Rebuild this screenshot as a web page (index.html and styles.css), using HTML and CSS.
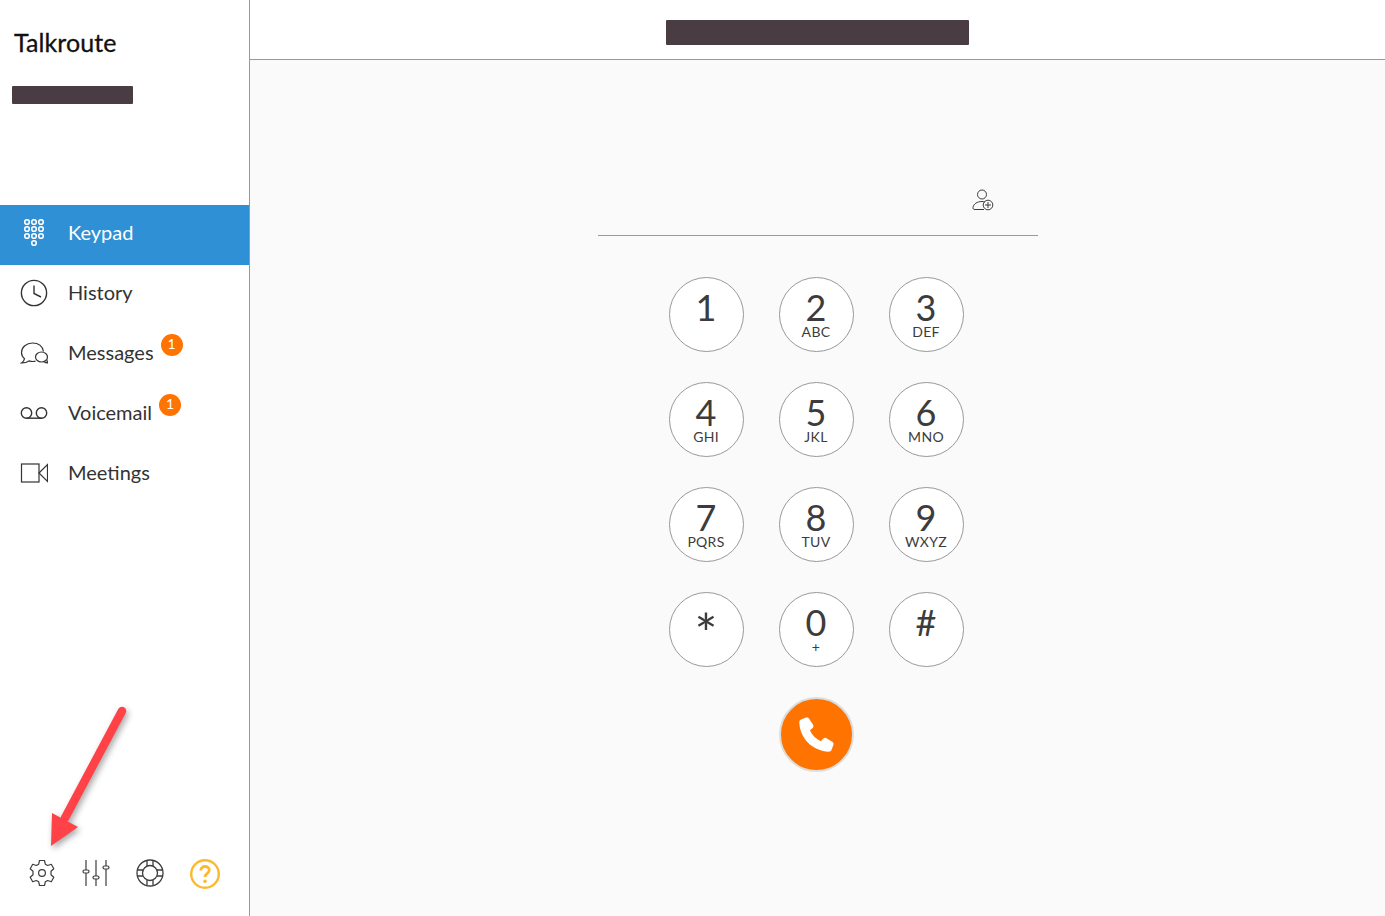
FILE: index.html
```html
<!DOCTYPE html>
<html lang="en">
<head>
    <meta charset="UTF-8">
    <title>Talkroute</title>
    <link rel="stylesheet" href="styles.css">
</head>
<body>
    <aside class="sidebar">
        <div class="brand">Talkroute</div>
        <div class="redacted redacted-user"></div>

        <nav class="nav">
            <a class="nav-item active">
                <svg class="nav-icon" viewBox="0 0 28 28" fill="none" stroke="#fff" stroke-width="1.6">
                    <circle cx="7" cy="3" r="2.3"/><circle cx="14" cy="3" r="2.3"/><circle cx="21" cy="3" r="2.3"/>
                    <circle cx="7" cy="10" r="2.3"/><circle cx="14" cy="10" r="2.3"/><circle cx="21" cy="10" r="2.3"/>
                    <circle cx="7" cy="17" r="2.3"/><circle cx="14" cy="17" r="2.3"/><circle cx="21" cy="17" r="2.3"/>
                    <circle cx="14" cy="24" r="2.3"/>
                </svg>
                <span>Keypad</span>
            </a>
            <a class="nav-item">
                <svg class="nav-icon" viewBox="0 0 28 28" fill="none" stroke="#333" stroke-width="1.4">
                    <circle cx="14" cy="14" r="12.6"/>
                    <path d="M14 6.5V14.5L21 18"/>
                </svg>
                <span>History</span>
            </a>
            <a class="nav-item">
                <svg class="nav-icon" viewBox="0 0 28 28" fill="none" stroke="#333" stroke-width="1.2">
                    <path d="M15.500 22.200C14.700 22.400 14 22.500 13 22.500C11.500 22.500 10.200 22.300 9 21.900C7 23.200 4.500 24 1.500 23.900C3 23 4.200 21.600 4.500 19.600C2.500 18 1.500 15.800 1.500 13.500C1.500 8 6.500 4 12.500 4C18.500 4 22.500 7.500 23.500 12.500"/>
                    <ellipse cx="21.500" cy="18" rx="6" ry="5"/>
                    <path d="M24 22.500C25 23.500 26.300 24 28 23.900C27.200 23 26.900 22 26.900 20.500"/>
                </svg>
                <span class="has-badge">Messages<b class="badge">1</b></span>
            </a>
            <a class="nav-item">
                <svg class="nav-icon" viewBox="0 0 28 28" fill="none" stroke="#333" stroke-width="1.4">
                    <circle cx="6.500" cy="14" r="5.200"/>
                    <circle cx="21.500" cy="14" r="5.200"/>
                    <path d="M6.500 19.200H21.500"/>
                </svg>
                <span class="has-badge">Voicemail<b class="badge">1</b></span>
            </a>
            <a class="nav-item">
                <svg class="nav-icon" viewBox="0 0 28 28" fill="none" stroke="#333" stroke-width="1.2">
                    <rect x="1.500" y="5" width="17.500" height="18"/>
                    <path d="M19 14L27.500 5.500V22.500Z"/>
                </svg>
                <span>Meetings</span>
            </a>
        </nav>

        <div class="tools">
            <svg class="tool" viewBox="0 0 28 28" fill="none" stroke="#3c3c3c" stroke-width="1.200" stroke-linejoin="round">
                <path d="M11.500 1.500H16.500L17.300 5.200L19.700 6.500L23.300 5.300L25.800 9.700L23 12.200V15.800L25.800 18.300L23.300 22.700L19.700 21.500L17.300 22.800L16.500 26.500H11.500L10.700 22.800L8.300 21.500L4.700 22.700L2.200 18.300L5 15.800V12.200L2.200 9.700L4.700 5.300L8.300 6.500L10.700 5.200Z"/>
                <circle cx="14" cy="14" r="3.400"/>
            </svg>
            <svg class="tool" viewBox="0 0 28 28" fill="none" stroke="#3c3c3c" stroke-width="1.200">
                <path d="M4 1V11M4 14V27M14 1V17M14 20V27M24 1V7M24 10V27"/>
                <rect x="1" y="11" width="6" height="3" rx="1.500"/>
                <rect x="11" y="17" width="6" height="3" rx="1.500"/>
                <rect x="21" y="7" width="6" height="3" rx="1.500"/>
            </svg>
            <svg class="tool" viewBox="0 0 28 28" fill="none" stroke="#3c3c3c" stroke-width="1.300">
                <circle cx="14" cy="14" r="13"/>
                <circle cx="14" cy="14" r="7.500"/>
                <path d="M11 1.500V7M17 1.500V7M11 21V26.500M17 21V26.500M1.500 11H7M1.500 17H7M21 11H26.500M21 17H26.500"/>
            </svg>
            <svg class="tool tool-help" viewBox="0 0 30 30" fill="none" stroke="#fdb92e" stroke-width="2.400">
                <circle cx="15" cy="15" r="13.800"/>
                <path d="M10.800 11.500C10.800 9 12.800 7.500 15 7.500C17.500 7.500 19.300 9 19.300 11.200C19.300 14.200 15 14.500 15 18" stroke-width="2.800"/>
                <circle cx="15" cy="22.300" r="1.800" fill="#fdb92e" stroke="none"/>
            </svg>
        </div>

        <!-- red arrow drawn over the sidebar -->
        <svg class="arrow" viewBox="0 0 100 160">
            <path d="M90 6L33 113" stroke="#ff4248" stroke-width="8.500" stroke-linecap="round" fill="none"/>
            <path d="M19 141L20 108L46 122Z" fill="#ff4248"/>
        </svg>
    </aside>

    <main class="main">
        <header class="topbar">
            <div class="redacted redacted-number"></div>
        </header>

        <section class="dialer">
            <div class="dial-input">
                <svg class="add-contact" viewBox="0 0 22 22" fill="none" stroke="#3c3c3c" stroke-width="1">
                    <circle cx="10" cy="5.500" r="4.500"/>
                    <path d="M12 20.500H3C1.500 20.500 0.800 19.800 1 18.500C1.500 15 5 12.500 10 12.500C11 12.500 12 12.600 13 13"/>
                    <circle cx="16" cy="16" r="4.800"/>
                    <path d="M16 13V19M13 16H19"/>
                </svg>
            </div>

            <div class="keys">
                <button class="key"><span class="digit">1</span></button>
                <button class="key"><span class="digit">2</span><span class="letters">ABC</span></button>
                <button class="key"><span class="digit">3</span><span class="letters">DEF</span></button>
                <button class="key"><span class="digit">4</span><span class="letters">GHI</span></button>
                <button class="key"><span class="digit">5</span><span class="letters">JKL</span></button>
                <button class="key"><span class="digit">6</span><span class="letters">MNO</span></button>
                <button class="key"><span class="digit">7</span><span class="letters">PQRS</span></button>
                <button class="key"><span class="digit">8</span><span class="letters">TUV</span></button>
                <button class="key"><span class="digit">9</span><span class="letters">WXYZ</span></button>
                <button class="key"><span class="digit digit-star">*</span></button>
                <button class="key"><span class="digit">0</span><span class="letters">+</span></button>
                <button class="key"><span class="digit">#</span></button>
            </div>

            <button class="call">
                <svg viewBox="0 0 512 512" width="41" height="41">
                    <path fill="#fff" d="M164 60c-8-14-24-20-38-15L62 69C49 75 41 87 41 101c6 205 165 364 370 370 14 0 26-8 32-21l24-64c5-14-1-30-15-38l-72-46c-13-8-29-6-39 5l-30 34c-60-26-111-77-137-137l34-30c11-10 13-26 5-39z"/>
                </svg>
            </button>
        </section>
    </main>
</body>
</html>
```

FILE: styles.css
```css
* {
    box-sizing: border-box;
}
html, body {
    height: 100%;
}
body {
    margin: 0;
    display: flex;
    font-family: 'Lato', 'Open Sans', sans-serif;
    color: #333;
    background-color: #fff;
    overflow: hidden;
}
.redacted {
    background-color: #4a3c43;
    border-radius: 1px;
}

/* sidebar */
.sidebar {
    position: relative;
    width: 250px;
    flex-shrink: 0;
    display: flex;
    flex-direction: column;
    border-right: 1px solid #999;
    background: #fff;
}
.brand {
    margin: 26px 0 0 14px;
    font-size: 25px;
    line-height: 32px;
    letter-spacing: 0.1px;
    color: #111;
    -webkit-text-stroke: 0.3px #111;
}
.redacted-user {
    width: 121px;
    height: 18px;
    margin: 28px 0 0 12px;
}
.nav {
    margin-top: 101px;
}
.nav-item {
    height: 60px;
    display: flex;
    align-items: center;
    padding: 0 0 4px 20px;
    font-size: 20px;
    color: #333;
}
.nav-item span {
    margin-bottom: 2px;
}
.nav-item.active {
    background-color: #2f90d5;
    color: #fff;
}
.nav-icon {
    width: 28px;
    height: 28px;
    margin-right: 20px;
    flex-shrink: 0;
}
.has-badge {
    position: relative;
}
.badge {
    position: absolute;
    top: -6px;
    right: -29px;
    width: 22px;
    height: 22px;
    border-radius: 50%;
    background-color: #ff7300;
    color: #fff;
    font-size: 14px;
    font-weight: normal;
    line-height: 20px;
    text-align: center;
}
.tools {
    margin-top: auto;
    height: 57px;
    padding-left: 28px;
    display: flex;
    align-items: flex-start;
    gap: 26px;
}
.tool {
    width: 28px;
    height: 28px;
    flex-shrink: 0;
}
.tool-help {
    width: 30px;
    height: 30px;
}
.arrow {
    position: absolute;
    left: 32px;
    top: 705px;
    width: 100px;
    height: 160px;
    filter: drop-shadow(2px 3px 3px rgba(0,0,0,0.35));
}

/* main */
.main {
    flex: 1;
    display: flex;
    flex-direction: column;
    background-color: #fafafa;
}
.topbar {
    height: 60px;
    background: #fff;
    border-bottom: 1px solid #999;
    display: flex;
    justify-content: center;
    padding-top: 20px;
}
.redacted-number {
    width: 303px;
    height: 25px;
}
.dialer {
    width: 440px;
    margin: 0 auto;
    display: flex;
    flex-direction: column;
}
.dial-input {
    height: 116px;
    margin-top: 60px;
    padding: 69px 0 0 374px;
    border-bottom: 1px solid #999;
}
.add-contact {
    display: block;
    width: 22px;
    height: 22px;
}
.keys {
    margin: 41px 0 0 71px;
    display: grid;
    grid-template-columns: repeat(3, 75px);
    grid-auto-rows: 75px;
    column-gap: 35px;
    row-gap: 30px;
}
.key {
    width: 75px;
    height: 75px;
    padding: 10px 0 0;
    border: 1px solid #999;
    border-radius: 50%;
    background: #fff;
    display: flex;
    flex-direction: column;
    align-items: center;
    font-family: inherit;
    color: #3c3c3c;
}
.digit {
    font-size: 36px;
    line-height: 38px;
    margin-bottom: -1px;
}
.digit-star {
    font-size: 54px;
    padding-top: 11px;
}
.letters {
    font-size: 14px;
    line-height: 14px;
    letter-spacing: 0.3px;
}
.call {
    width: 75px;
    height: 75px;
    margin: 30px 0 0 181px;
    padding: 0;
    border: 2px solid #ddd;
    border-radius: 50%;
    background-color: #ff7300;
    display: flex;
    align-items: center;
    justify-content: center;
}
```
